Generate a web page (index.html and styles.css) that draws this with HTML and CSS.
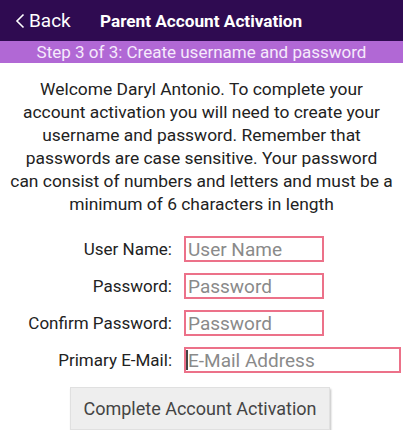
FILE: index.html
```html
<!DOCTYPE html>
<html lang="en">
<head>
    <meta charset="UTF-8">
    <meta name="viewport" content="width=device-width, initial-scale=1.0">
    <title>Parent Account Activation</title>
    <link rel="stylesheet" href="styles.css">
</head>
<body>
    <div class="topbar">
        <a class="back" href="#">
            <svg class="chev" width="10" height="16" viewBox="0 0 10 16"><path d="M8.5 1.5 L2 8 L8.5 14.5" fill="none" stroke="#fff" stroke-width="1.6"/></svg>
            <span>Back</span>
        </a>
        <span class="title">Parent Account Activation</span>
    </div>
    <div class="step">Step 3 of 3: Create username and password</div>

    <p class="intro">Welcome Daryl Antonio. To complete your<br>account activation you will need to create your<br>username and password. Remember that<br>passwords are case sensitive. Your password<br>can consist of numbers and letters and must be a<br>minimum of 6 characters in length</p>

    <form class="form">
        <label for="user">User Name:</label>
        <input type="text" id="user" placeholder="User Name">
        <label for="pass">Password:</label>
        <input type="password" id="pass" placeholder="Password">
        <label for="pass2">Confirm Password:</label>
        <input type="password" id="pass2" placeholder="Password">
        <label for="email">Primary E-Mail:</label>
        <div class="email-wrap">
            <span class="caret"></span>
            <input type="text" id="email" class="wide" placeholder="E-Mail Address">
        </div>
    </form>

    <div class="actions">
        <button type="button" class="btn">Complete Account Activation</button>
    </div>
</body>
</html>
```

FILE: styles.css
```css
body {
    margin: 0;
    font-family: Roboto, "Noto Sans", sans-serif;
    background: #fff;
    color: #222;
}

.topbar {
    height: 41px;
    background: #2f0b51;
    display: flex;
    align-items: center;
    color: #fff;
}

.back {
    display: flex;
    align-items: center;
    color: #fff;
    text-decoration: none;
    font-size: 19px;
    padding-left: 15px;
    width: 85px;
}

.back .chev {
    margin-right: 4px;
}

.title {
    font-weight: bold;
    font-size: 17.2px;
}

.step {
    height: 22px;
    line-height: 22px;
    background: #b168d5;
    color: #f6eafc;
    text-align: center;
    font-size: 17px;
}

.intro {
    margin: 15px 0 0;
    padding: 0 4px;
    text-align: center;
    font-size: 17.4px;
    line-height: 23px;
}

.form {
    display: grid;
    grid-template-columns: 172px auto;
    column-gap: 12px;
    row-gap: 11px;
    align-items: center;
    justify-items: start;
    margin-top: 20px;
}

.form label {
    justify-self: end;
    font-size: 17px;
    color: #222;
}

.form input {
    box-sizing: border-box;
    width: 140px;
    height: 26px;
    margin: 0;
    border: 2px solid #ec7189;
    padding: 0 2px;
    font-family: Roboto, "Noto Sans", sans-serif;
    font-size: 19px;
    color: #333;
    outline: none;
}

.form input::placeholder {
    color: #8a8a8a;
}

.form input.wide {
    width: 217px;
}

.email-wrap {
    position: relative;
}

.caret {
    position: absolute;
    left: 2px;
    top: 3px;
    width: 2px;
    height: 20px;
    background: #444;
}

.actions {
    display: flex;
    justify-content: center;
    margin-top: 14px;
    padding-right: 3px;
}

.btn {
    width: 260px;
    height: 43px;
    background: #eeeeee;
    border: 1px solid #e0e0e0;
    box-shadow: 1px 2px 2px rgba(0, 0, 0, 0.25);
    font-family: Roboto, "Noto Sans", sans-serif;
    font-size: 18px;
    color: #444;
}
```
